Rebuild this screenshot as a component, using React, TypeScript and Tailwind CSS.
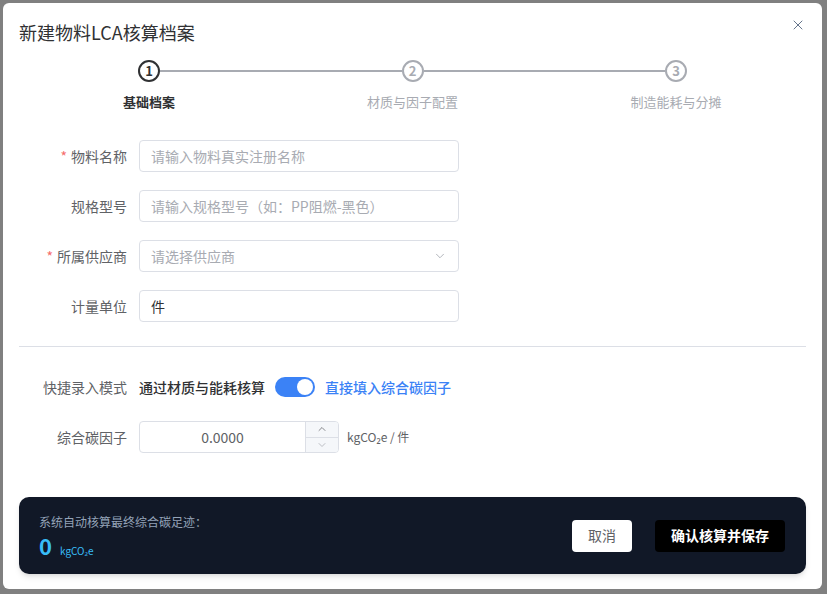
import { ChevronDown, ChevronUp, X } from 'lucide-react';

const font = { fontFamily: '"Noto Sans CJK SC", "Noto Sans", sans-serif' };

const steps = [
  { n: 1, label: '基础档案', active: true },
  { n: 2, label: '材质与因子配置', active: false },
  { n: 3, label: '制造能耗与分摊', active: false },
];

function Field({ label, required, children }: { label: string; required?: boolean; children: React.ReactNode }) {
  return (
    <div className="flex items-center">
      <label className="w-[120px] pr-3 text-right text-[14px] text-[#606266]">
        {required && <span className="mr-1 text-[#f56c6c]">*</span>}
        {label}
      </label>
      {children}
    </div>
  );
}

export default function App() {
  return (
    <div className="h-[594px] w-[827px] bg-[#808080] p-[3px] pr-[5px] pb-[5px]" style={font}>
      <div className="flex h-full flex-col rounded-md bg-white px-4">
        <div className="flex items-start justify-between pt-[17px]">
          <h2 className="text-[18px] leading-[24px] text-[#303133]">新建物料LCA核算档案</h2>
          <X className="mt-[-3px] h-4 w-4 text-[#64748b]" strokeWidth={1.5} />
        </div>

        <div className="mt-[16px] flex items-start pl-[119px] pr-[119px]">
          {steps.map((s, i) => (
            <div key={s.n} className={`relative flex flex-col items-center ${i < 2 ? 'flex-1' : ''}`}>
              <div className="flex w-full items-center">
                <div
                  className={`z-10 flex h-[22px] w-[22px] shrink-0 items-center justify-center rounded-full border-2 bg-white text-[13px] font-bold ${
                    s.active ? 'border-[#303133] text-[#303133]' : 'border-[#a8abb2] text-[#a8abb2]'
                  }`}
                >
                  {s.n}
                </div>
                {i < 2 && <div className="h-[2px] flex-1 bg-[#a8abb2]" />}
              </div>
              <div
                className={`absolute top-[32px] left-[11px] -translate-x-1/2 whitespace-nowrap text-[13px] ${
                  s.active ? 'font-bold text-[#303133]' : 'text-[#a8abb2]'
                }`}
              >
                {s.label}
              </div>
            </div>
          ))}
        </div>

        <div className="mt-[58px] flex flex-col gap-[18px]">
          <Field label="物料名称" required>
            <div className="flex h-[32px] w-[320px] items-center rounded border border-[#dcdfe6] px-[11px] text-[14px] text-[#a8abb2]">
              请输入物料真实注册名称
            </div>
          </Field>
          <Field label="规格型号">
            <div className="flex h-[32px] w-[320px] items-center rounded border border-[#dcdfe6] px-[11px] text-[14px] text-[#a8abb2]">
              请输入规格型号（如：PP阻燃-黑色）
            </div>
          </Field>
          <Field label="所属供应商" required>
            <div className="flex h-[32px] w-[320px] items-center justify-between rounded border border-[#dcdfe6] px-[11px] text-[14px] text-[#a8abb2]">
              请选择供应商
              <ChevronDown className="h-[14px] w-[14px] text-[#a8abb2]" strokeWidth={1.5} />
            </div>
          </Field>
          <Field label="计量单位">
            <div className="flex h-[32px] w-[320px] items-center rounded border border-[#dcdfe6] px-[11px] text-[14px] text-[#303133]">
              件
            </div>
          </Field>
        </div>

        <div className="mt-[24px] h-px bg-[#dcdfe6]" />

        <div className="mt-[24px] flex flex-col gap-[18px]">
          <Field label="快捷录入模式">
            <div className="flex h-[32px] items-center text-[14px]">
              <span className="font-medium text-[#303133]">通过材质与能耗核算</span>
              <div className="ml-[10px] flex h-[20px] w-[40px] items-center justify-end rounded-full bg-[#3b82f6] pr-[2px]">
                <div className="h-[16px] w-[16px] rounded-full bg-white" />
              </div>
              <span className="ml-[10px] font-medium text-[#3b82f6]">直接填入综合碳因子</span>
            </div>
          </Field>
          <Field label="综合碳因子">
            <div className="flex items-center">
              <div className="flex h-[32px] w-[200px] overflow-hidden rounded border border-[#dcdfe6]">
                <div className="flex flex-1 items-center justify-center text-[14px] text-[#606266]">0.0000</div>
                <div className="flex w-[33px] flex-col border-l border-[#dcdfe6] bg-[#f5f7fa]">
                  <div className="flex flex-1 items-center justify-center border-b border-[#dcdfe6]">
                    <ChevronUp className="h-3 w-3 text-[#606266]" strokeWidth={1.5} />
                  </div>
                  <div className="flex flex-1 items-center justify-center">
                    <ChevronDown className="h-3 w-3 text-[#a8abb2]" strokeWidth={1.5} />
                  </div>
                </div>
              </div>
              <span className="ml-[8px] text-[12px] text-[#606266]">kgCO₂e / 件</span>
            </div>
          </Field>
        </div>

        <div className="mt-auto mb-[15px] flex h-[77px] items-center justify-between rounded-[10px] bg-[#111827] pl-[20px] pr-[21px] shadow-md">
          <div className="flex flex-col">
            <span className="text-[12px] text-[#94a3b8]">系统自动核算最终综合碳足迹：</span>
            <div className="mt-[1px] flex items-baseline">
              <span className="text-[22px] font-bold leading-[26px] text-[#38bdf8]">0</span>
              <span className="ml-[8px] text-[10px] text-[#38bdf8]">kgCO₂e</span>
            </div>
          </div>
          <div className="flex items-center gap-[23px]">
            <button className="h-[32px] w-[60px] rounded bg-white text-[14px] text-[#606266]">取消</button>
            <button className="h-[32px] w-[130px] rounded bg-black text-[14px] font-bold text-white">确认核算并保存</button>
          </div>
        </div>
      </div>
    </div>
  );
}
